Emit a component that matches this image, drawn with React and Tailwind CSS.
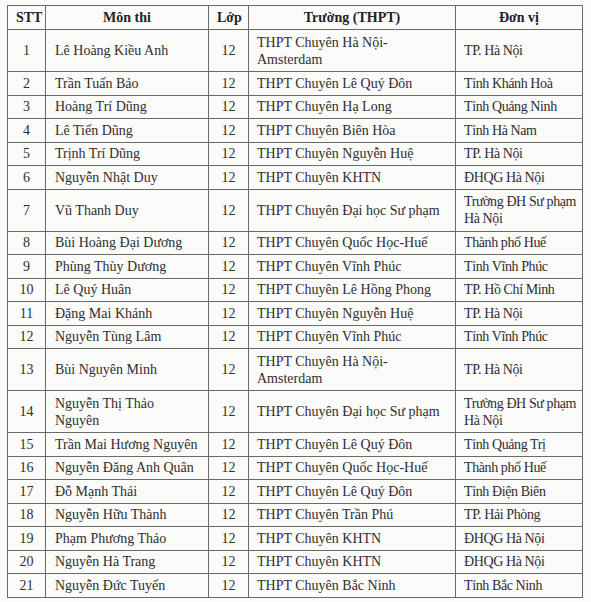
import React from "react";

const rows = [
  ["1", "Lê Hoàng Kiều Anh", "THPT Chuyên Hà Nội-|Amsterdam", "TP. Hà Nội", true],
  ["2", "Trần Tuấn Bảo", "THPT Chuyên Lê Quý Đôn", "Tỉnh Khánh Hoà"],
  ["3", "Hoàng Trí Dũng", "THPT Chuyên Hạ Long", "Tỉnh Quảng Ninh"],
  ["4", "Lê Tiến Dũng", "THPT Chuyên Biên Hòa", "Tỉnh Hà Nam"],
  ["5", "Trịnh Trí Dũng", "THPT Chuyên Nguyễn Huệ", "TP. Hà Nội"],
  ["6", "Nguyễn Nhật Duy", "THPT Chuyên KHTN", "ĐHQG Hà Nội"],
  ["7", "Vũ Thanh Duy", "THPT Chuyên Đại học Sư phạm", "Trường ĐH Sư phạm|Hà Nội", true],
  ["8", "Bùi Hoàng Đại Dương", "THPT Chuyên Quốc Học-Huế", "Thành phố Huế"],
  ["9", "Phùng Thùy Dương", "THPT Chuyên Vĩnh Phúc", "Tỉnh Vĩnh Phúc"],
  ["10", "Lê Quý Huân", "THPT Chuyên Lê Hồng Phong", "TP. Hồ Chí Minh"],
  ["11", "Đặng Mai Khánh", "THPT Chuyên Nguyễn Huệ", "TP. Hà Nội"],
  ["12", "Nguyễn Tùng Lâm", "THPT Chuyên Vĩnh Phúc", "Tỉnh Vĩnh Phúc"],
  ["13", "Bùi Nguyên Minh", "THPT Chuyên Hà Nội-|Amsterdam", "TP. Hà Nội", true],
  ["14", "Nguyễn Thị Thảo|Nguyên", "THPT Chuyên Đại học Sư phạm", "Trường ĐH Sư phạm|Hà Nội", true],
  ["15", "Trần Mai Hương Nguyên", "THPT Chuyên Lê Quý Đôn", "Tỉnh Quảng Trị"],
  ["16", "Nguyễn Đăng Anh Quân", "THPT Chuyên Quốc Học-Huế", "Thành phố Huế"],
  ["17", "Đỗ Mạnh Thái", "THPT Chuyên Lê Quý Đôn", "Tỉnh Điện Biên"],
  ["18", "Nguyễn Hữu Thành", "THPT Chuyên Trần Phú", "TP. Hải Phòng"],
  ["19", "Phạm Phương Thảo", "THPT Chuyên KHTN", "ĐHQG Hà Nội"],
  ["20", "Nguyễn Hà Trang", "THPT Chuyên KHTN", "ĐHQG Hà Nội"],
  ["21", "Nguyễn Đức Tuyến", "THPT Chuyên Bắc Ninh", "Tỉnh Bắc Ninh"],
];

function Lines({ text }) {
  const parts = text.split("|");
  return parts.map((p, i) => (
    <React.Fragment key={i}>
      {i > 0 && <br />}
      {p}
    </React.Fragment>
  ));
}

export default function App() {
  const cell =
    "border border-[#6b6b6b] px-[8px] py-0 align-middle whitespace-nowrap font-['Liberation_Serif','Times_New_Roman',serif]";
  return (
    <div className="w-[591px] h-[602px] bg-[#fbfbfa] pt-[5px] pl-[7px] text-[#2e2e2e] text-[14px] overflow-hidden font-['Liberation_Serif','Times_New_Roman',serif]">
      <table className="border-collapse table-fixed w-[575px]">
        <colgroup>
          <col className="w-[38px]" />
          <col className="w-[163px]" />
          <col className="w-[40px]" />
          <col className="w-[207px]" />
          <col className="w-[127px]" />
        </colgroup>
        <thead>
          <tr className="h-[24px] font-bold text-[#222]">
            <th className={`${cell} text-center px-0`}>STT</th>
            <th className={`${cell} text-center`}>Môn thi</th>
            <th className={`${cell} text-center px-0`}>Lớp</th>
            <th className={`${cell} text-center`}>Trường (THPT)</th>
            <th className={`${cell} text-center`}>Đơn vị</th>
          </tr>
        </thead>
        <tbody>
          {rows.map((r) => (
            <tr key={r[0]} className={r[4] ? "h-[42px] leading-[17px]" : "h-[23.5px] leading-[17px]"}>
              <td className={`${cell} text-center px-0`}>{r[0]}</td>
              <td className={`${cell} pl-[9px]`}>
                <Lines text={r[1]} />
              </td>
              <td className={`${cell} text-center px-0`}>12</td>
              <td className={cell}>
                <Lines text={r[2]} />
              </td>
              <td className={`${cell} tracking-[-0.4px]`}>
                <Lines text={r[3]} />
              </td>
            </tr>
          ))}
        </tbody>
      </table>
    </div>
  );
}
